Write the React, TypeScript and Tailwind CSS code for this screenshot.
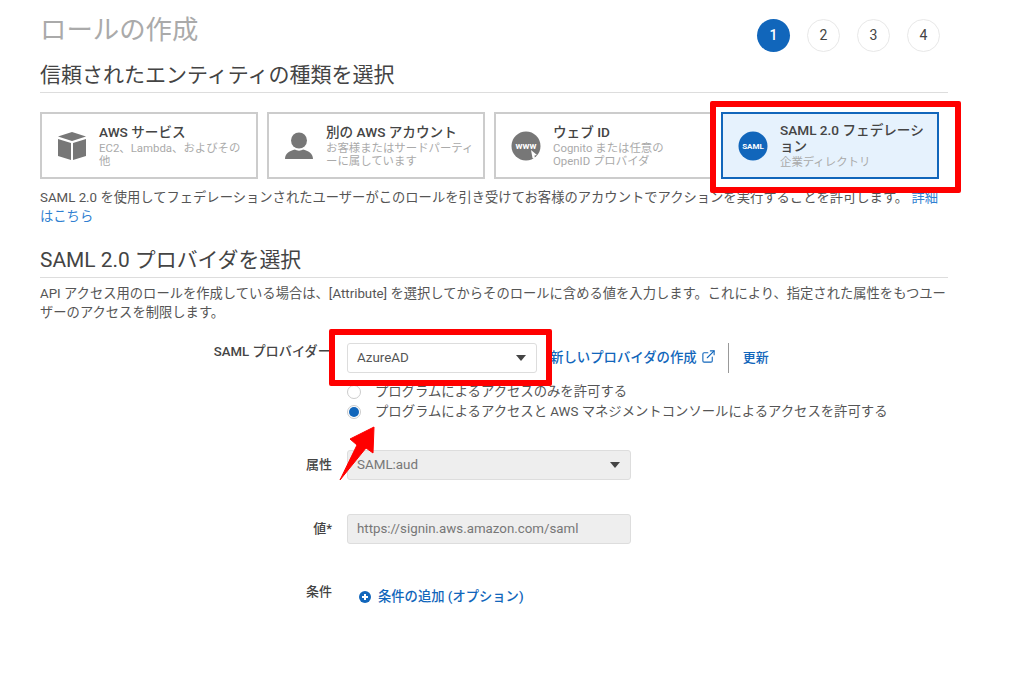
import { ExternalLink } from 'lucide-react'

function TypeCard({ title, sub, icon, active }: { title: string; sub: string; icon: React.ReactNode; active?: boolean }) {
  return (
    <div className={`w-[218px] h-[67px] flex items-center border-2 pl-[15px] pr-2 ${active ? 'border-[#1166bb] bg-[#e6f2fd]' : 'border-[#cccccc] bg-white'}`}>
      <div className="w-[30px] h-[30px] shrink-0 mr-[12px] flex items-center justify-center">{icon}</div>
      <div className={`min-w-0 ${active ? '-mt-[1px]' : 'mt-[1px]'}`}>
        <div className="text-[13.6px] leading-[16px] font-medium text-[#444444]">{title}</div>
        <div className="text-[11.4px] leading-[13px] text-[#aaaaaa] mt-[2px]">{sub}</div>
      </div>
    </div>
  )
}

function Caret() {
  return <span className="w-0 h-0 border-x-[5.5px] border-x-transparent border-t-[6px] border-t-[#444444]" />
}

function Step({ n, active }: { n: number; active?: boolean }) {
  return (
    <div className={`w-[33px] h-[33px] rounded-full flex items-center justify-center text-[14px] ${active ? 'bg-[#1166bb] text-white font-medium' : 'border border-[#e8e8e8] text-[#444444]'}`}>
      {n}
    </div>
  )
}

export default function App() {
  return (
    <div className="relative w-[1024px] h-[677px] overflow-hidden bg-white pl-[40px] text-[#555555] font-['Roboto','Noto_Sans_CJK_JP',sans-serif]">
      <div className="w-[908px]">
        <div className="flex items-start justify-between pr-[8px] h-[62px]">
          <h1 className="text-[26.4px] leading-[34px] mt-[13px] text-[#aaaaaa]">ロールの作成</h1>
          <div className="flex gap-[17px] mt-[19px]">
            <Step n={1} active />
            <Step n={2} />
            <Step n={3} />
            <Step n={4} />
          </div>
        </div>
        <h2 className="text-[21px] leading-[26px] text-[#444444] border-b border-[#dddddd] h-[31px]">信頼されたエンティティの種類を選択</h2>

        <div className="flex gap-[9px] mt-[19px] w-[930px]">
          <TypeCard
            title="AWS サービス"
            sub="EC2、Lambda、およびその他"
            icon={
              <svg viewBox="0 0 30 30" className="w-[30px] h-[30px]" fill="#777777">
                <path d="M15 1 L29 5.5 L15 10 L1 5.5 Z" />
                <path d="M1 8 L14 12 V29 L1 25 Z" />
                <path d="M29 8 L16 12 V29 L29 25 Z" />
              </svg>
            }
          />
          <TypeCard
            title="別の AWS アカウント"
            sub="お客様またはサードパーティーに属しています"
            icon={
              <svg viewBox="0 0 30 30" className="w-[30px] h-[30px]" fill="#777777">
                <circle cx="15" cy="9.5" r="8" />
                <path d="M1 28 C1 22 6 20 11 18.5 C13 20 17 20 19 18.5 C24 20 29 22 29 28 Z" />
              </svg>
            }
          />
          <TypeCard
            title="ウェブ ID"
            sub="Cognito または任意の OpenID プロバイダ"
            icon={
              <svg viewBox="0 0 30 30" className="w-[30px] h-[30px]">
                <circle cx="15" cy="15" r="14.5" fill="#777777" />
                <text x="15" y="17.5" textAnchor="middle" fontSize="9.5" fontWeight="700" fill="#ffffff" fontFamily="Roboto, sans-serif">www</text>
                <path d="M20 19 L26 24 L23.5 24.5 L24 28 L21.5 27 Z" fill="#ffffff" />
              </svg>
            }
          />
          <TypeCard
            active
            title="SAML 2.0 フェデレーション"
            sub="企業ディレクトリ"
            icon={
              <svg viewBox="0 0 30 30" className="w-[30px] h-[30px]">
                <circle cx="15" cy="15" r="14.5" fill="#1166bb" />
                <text x="15" y="18" textAnchor="middle" fontSize="8" fontWeight="700" fill="#ffffff" fontFamily="Roboto, sans-serif">SAML</text>
              </svg>
            }
          />
        </div>

        <p className="text-[13.3px] leading-[19px] mt-[9px]">
          SAML 2.0 を使用してフェデレーションされたユーザーがこのロールを引き受けてお客様のアカウントでアクションを実行することを許可します。 <span className="text-[#2f7fd1]">詳細はこちら</span>
        </p>

        <h2 className="text-[20.9px] leading-[26px] text-[#444444] border-b border-[#dddddd] h-[31px] mt-[21px]">SAML 2.0 プロバイダを選択</h2>
        <p className="text-[13.3px] leading-[19px] mt-[6px]">
          API アクセス用のロールを作成している場合は、[Attribute] を選択してからそのロールに含める値を入力します。これにより、指定された属性をもつユーザーのアクセスを制限します。
        </p>

        <div className="mt-[11px] grid grid-cols-[291px_1fr] gap-x-[16px] items-start">
          <div className="text-[13.2px] font-medium text-[#444444] text-right leading-[18px] mt-[10px] whitespace-nowrap">SAML プロバイダー</div>
          <div className="pt-[10px]">
            <div className="flex items-center">
              <div className="w-[190px] h-[30px] border border-[#dddddd] rounded-[3px] flex items-center justify-between pl-[9px] pr-[10px] text-[13.4px]">
                <span>AzureAD</span>
                <Caret />
              </div>
              <span className="ml-[13px] text-[13.4px] font-medium text-[#1166bb] whitespace-nowrap">新しいプロバイダの作成</span>
              <ExternalLink className="ml-[4px] mb-[3px] w-[15px] h-[15px] text-[#1166bb]" strokeWidth={1.75} />
              <div className="ml-[12px] h-[30px] border-l border-[#999999]" />
              <span className="ml-[14px] text-[13px] font-medium text-[#1166bb]">更新</span>
            </div>
            <div className="mt-[9px] flex items-center h-[19px] text-[13.35px]">
              <span className="w-[14px] h-[14px] rounded-full border border-[#cccccc] mr-[14px]" />
              プログラムによるアクセスのみを許可する
            </div>
            <div className="mt-[1px] flex items-center h-[19px] text-[13.35px]">
              <span className="w-[14px] h-[14px] rounded-full border border-[#cccccc] mr-[14px] flex items-center justify-center">
                <span className="w-[10px] h-[10px] rounded-full bg-[#1166bb]" />
              </span>
              プログラムによるアクセスと AWS マネジメントコンソールによるアクセスを許可する
            </div>
          </div>

          <div className="text-[13px] font-medium text-[#444444] text-right leading-[18px] mt-[35px] mr-[-1px]">属性</div>
          <div className="mt-[29px] w-[284px] h-[30px] bg-[#eeeeee] border border-[#dddddd] rounded-[3px] flex items-center justify-between pl-[9px] pr-[10px] text-[13.4px] text-[#777777]">
            <span>SAML:aud</span>
            <Caret />
          </div>

          <div className="text-[13px] font-medium text-[#444444] text-right leading-[18px] mt-[40px] mr-[-1px]">値*</div>
          <div className="mt-[34px] w-[284px] h-[30px] bg-[#eeeeee] border border-[#dddddd] rounded-[3px] flex items-center pl-[9px] text-[13.3px] text-[#777777]">
            https://signin.aws.amazon.com/saml
          </div>

          <div className="text-[13px] font-medium text-[#444444] text-right leading-[18px] mt-[39px] mr-[-1px]">条件</div>
          <div className="mt-[43px] flex items-center pl-[12px] text-[13.3px] font-medium text-[#1166bb]">
            <svg viewBox="0 0 12 12" className="w-[12px] h-[12px] mr-[7px]">
              <circle cx="6" cy="6" r="6" fill="#1166bb" />
              <path d="M6 3 V9 M3 6 H9" stroke="#ffffff" strokeWidth="2" />
            </svg>
            条件の追加 (オプション)
          </div>
        </div>
      </div>

      {/* 赤枠と矢印は注釈 */}
      <div className="absolute left-[710px] top-[101px] w-[251px] h-[92px] border-[6px] border-[#ff0000] rounded-[2px]" />
      <div className="absolute left-[329px] top-[329px] w-[223px] h-[57px] border-[6px] border-[#ff0000] rounded-[2px]" />
      <svg className="absolute left-[338px] top-[426px] w-[38px] h-[56px]" viewBox="0 0 38 56">
        <path d="M2 54 L19 19 L12 13 L36 1 L35 27 L28 22 Z" fill="#ff0000" stroke="#ff0000" strokeLinejoin="round" />
      </svg>
    </div>
  )
}
